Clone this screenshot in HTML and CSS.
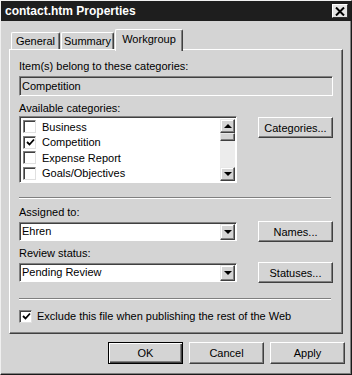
FILE: index.html
```html
<!DOCTYPE html>
<html lang="en">
<head>
  <meta charset="UTF-8" />
  <title>contact.htm Properties</title>
  <link rel="stylesheet" href="styles.css">
</head>
<body>
  <div class="window">
    <div class="titlebar">
      <span class="title">contact.htm Properties</span>
      <span class="close">
        <svg width="10" height="9" viewBox="0 0 10 9">
          <path d="M1 0.5 L9 8.5 M9 0.5 L1 8.5" stroke="#000" stroke-width="2"/>
        </svg>
      </span>
    </div>

    <div class="tabs">
      <div class="tab tab-general">General</div>
      <div class="tab tab-summary">Summary</div>
      <div class="tab selected">Workgroup</div>
    </div>

    <div class="panel">
      <div class="label">Item(s) belong to these categories:</div>
      <div class="field readonly">Competition</div>

      <div class="label label-avail">Available categories:</div>
      <div class="row">
        <div class="listbox">
          <div class="items">
            <div class="item"><span class="check"></span>Business</div>
            <div class="item"><span class="check">
              <svg width="9" height="9" viewBox="0 0 9 9"><path d="M1 4 L3.5 6.5 L8 1.5" stroke="#000" stroke-width="1.8" fill="none"/></svg>
            </span>Competition</div>
            <div class="item"><span class="check"></span>Expense Report</div>
            <div class="item"><span class="check"></span>Goals/Objectives</div>
          </div>
          <div class="scrollbar">
            <div class="sbtn"><span class="arrow-up"></span></div>
            <div class="thumb"></div>
            <div class="track"></div>
            <div class="sbtn"><span class="arrow-down"></span></div>
          </div>
        </div>
        <div class="button side-btn btn-cat">Categories...</div>
      </div>

      <div class="separator sep-1"></div>

      <div class="label label-assigned">Assigned to:</div>
      <div class="row row-combo">
        <div class="combo">
          <span class="combo-text">Ehren</span>
          <div class="sbtn drop"><span class="arrow-down"></span></div>
        </div>
        <div class="button side-btn">Names...</div>
      </div>

      <div class="label label-review">Review status:</div>
      <div class="row row-combo">
        <div class="combo">
          <span class="combo-text">Pending Review</span>
          <div class="sbtn drop"><span class="arrow-down"></span></div>
        </div>
        <div class="button side-btn">Statuses...</div>
      </div>

      <div class="separator sep-2"></div>

      <div class="exclude">
        <span class="check">
          <svg width="9" height="9" viewBox="0 0 9 9"><path d="M1 4 L3.5 6.5 L8 1.5" stroke="#000" stroke-width="1.8" fill="none"/></svg>
        </span>
        Exclude this file when publishing the rest of the Web
      </div>
    </div>

    <div class="footer">
      <div class="button default">OK</div>
      <div class="button">Cancel</div>
      <div class="button">Apply</div>
    </div>
  </div>
</body>
</html>
```

FILE: styles.css
```css
* {
  margin: 0;
  padding: 0;
  box-sizing: border-box;
}

body {
  width: 352px;
  height: 375px;
  background: #d4d4d4;
  font-family: "Liberation Sans", Arial, sans-serif;
  font-size: 11px;
  color: #000;
}

.window {
  width: 352px;
  height: 375px;
  background: #d4d4d4;
  border: 1px solid;
  border-color: #f0f0f0 #1a1a1a #1a1a1a #f0f0f0;
  box-shadow: inset -1px -1px #808080;
  display: flex;
  flex-direction: column;
}

/* title bar */
.titlebar {
  height: 20px;
  background: #1e1e1e;
  color: #fff;
  display: flex;
  align-items: center;
  justify-content: space-between;
  padding: 0 3px 0 4px;
}

.title {
  font-weight: bold;
  font-size: 12px;
}

.close {
  width: 16px;
  height: 14px;
  background: #e4e4e4;
  border: 1px solid;
  border-color: #fff #303030 #303030 #fff;
  display: flex;
  align-items: center;
  justify-content: center;
}

/* tabs */
.tabs {
  display: flex;
  align-items: flex-end;
  height: 20px;
  margin: 8px 0 0 8px;
  position: relative;
  z-index: 1;
}

.tab {
  height: 17px;
  border: 1px solid;
  border-bottom: none;
  border-color: #fff #404040 #fff #fff;
  border-radius: 2px 2px 0 0;
  box-shadow: inset -1px 0 #808080;
  line-height: 16px;
  text-align: center;
  background: #d4d4d4;
}

.tab-general {
  margin-left: 2px;
  width: 49px;
}

.tab-summary {
  margin-left: 1px;
  width: 53px;
}

.tab.selected {
  height: 22px;
  margin-bottom: -2px;
  width: 68px;
  margin-left: 1px;
  line-height: 18px;
}

/* panel */
.panel {
  width: 334px;
  height: 285px;
  margin-left: 8px;
  border: 1px solid;
  border-color: #fff #404040 #404040 #fff;
  box-shadow: inset -1px -1px #808080;
  padding: 9px 9px 0 9px;
  display: flex;
  flex-direction: column;
}

.label {
  line-height: 14px;
  height: 14px;
}

.label-avail { margin-top: 5px; }
.label-assigned { margin-top: 6px; }
.label-review { margin-top: 4px; }

.field {
  height: 20px;
  margin-top: 3px;
  width: 314px;
  border: 1px solid;
  border-color: #808080 #fff #fff #808080;
  box-shadow: inset 1px 1px #404040, inset -1px -1px #d4d4d4;
  padding: 0 2px;
  line-height: 18px;
}

.readonly {
  background: #d4d4d4;
}

.row {
  display: flex;
  justify-content: space-between;
  align-items: flex-start;
  margin-top: 1px;
}

.listbox {
  width: 218px;
  height: 67px;
  background: #fff;
  border: 1px solid;
  border-color: #808080 #fff #fff #808080;
  box-shadow: inset 1px 1px #404040;
  padding: 2px 1px 1px 2px;
  display: flex;
}

.items {
  flex: 1;
  display: flex;
  flex-direction: column;
}

.item {
  height: 16px;
  display: flex;
  align-items: center;
  gap: 6px;
  padding-left: 1px;
}

.check {
  width: 13px;
  height: 13px;
  background: #fff;
  border: 1px solid;
  border-color: #808080 #e0e0e0 #e0e0e0 #808080;
  box-shadow: inset 1px 1px #404040;
  display: flex;
  align-items: center;
  justify-content: center;
  flex-shrink: 0;
}

.check svg {
  margin: 1px 0 0 1px;
}

.scrollbar {
  width: 15px;
  display: flex;
  flex-direction: column;
}

.sbtn {
  width: 15px;
  height: 14px;
  background: #d4d4d4;
  border: 1px solid;
  border-color: #e8e8e8 #404040 #404040 #e8e8e8;
  box-shadow: inset -1px -1px #808080, inset 1px 1px #fff;
  display: flex;
  align-items: center;
  justify-content: center;
}

.thumb {
  height: 8px;
  background: #d4d4d4;
  border: 1px solid;
  border-color: #e8e8e8 #404040 #404040 #e8e8e8;
  box-shadow: inset -1px -1px #808080;
}

.track {
  flex: 1;
  background: #ececec;
}

.arrow-up,
.arrow-down {
  width: 0;
  height: 0;
  border-left: 4px solid transparent;
  border-right: 4px solid transparent;
}

.arrow-up {
  border-bottom: 4px solid #000;
}

.arrow-down {
  border-top: 4px solid #000;
}

.button {
  width: 75px;
  height: 22px;
  background: #d4d4d4;
  border: 1px solid;
  border-color: #fff #404040 #404040 #fff;
  box-shadow: inset -1px -1px #808080;
  display: flex;
  align-items: center;
  justify-content: center;
  font-size: 11px;
}

.side-btn {
  height: 21px;
}

.btn-cat {
  margin-top: 1px;
}

.separator {
  height: 2px;
  width: 312px;
  border-top: 1px solid #808080;
  border-bottom: 1px solid #fff;
}

.sep-1 { margin-top: 14px; }
.sep-2 { margin-top: 15px; }

.row-combo {
  margin-top: 2px;
  align-items: center;
}

.combo {
  width: 218px;
  height: 19px;
  background: #fff;
  border: 1px solid;
  border-color: #808080 #fff #fff #808080;
  box-shadow: inset 1px 1px #404040;
  display: flex;
  align-items: center;
  justify-content: space-between;
  padding: 1px 1px 1px 2px;
}

.combo-text {
  line-height: 15px;
}

.drop {
  height: 16px;
  width: 15px;
}

.exclude {
  margin-top: 9px;
  height: 14px;
  display: flex;
  align-items: center;
  gap: 5px;
}

.footer {
  display: flex;
  justify-content: flex-end;
  gap: 6px;
  margin-top: 8px;
  padding-right: 6px;
}

.button.default {
  border: 1px solid #000;
  box-shadow: inset 1px 1px #fff, inset -1px -1px #404040, inset -2px -2px #808080;
}
```
